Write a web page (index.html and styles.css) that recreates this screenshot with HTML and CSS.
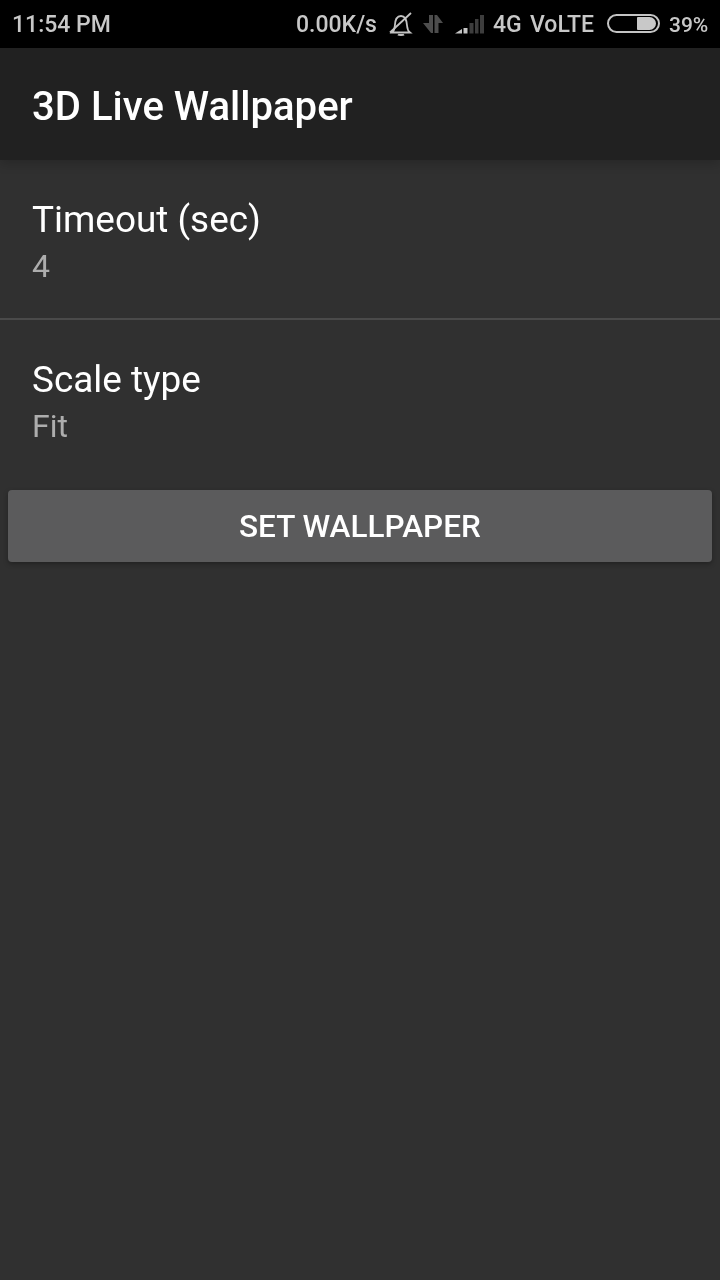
FILE: index.html
```html
<!DOCTYPE html>
<html lang="en">

<head>
    <meta charset="UTF-8">
    <title>3D Live Wallpaper</title>
    <link rel="stylesheet" href="styles.css">
</head>

<body>
    <div class="status">
        <div class="time">11:54 PM</div>
        <div class="indicators">
            <span class="speed">0.00K/s</span>
            <svg class="ic-bell" width="24" height="25" viewBox="0 0 24 25" fill="none" stroke="#c4c4c4" stroke-width="1.800">
                <path d="M3 20.500h18c-2-1.500-2.700-3.500-2.900-6.500-.3-5-1-10-6.100-10S6 9 5.800 14c-.1 3-1 5-2.800 6.500z" />
                <path d="M9 22.500c1 .8 5 .8 6 0" stroke-width="2" />
                <path d="M1 20.500L22 1" />
            </svg>
            <svg class="ic-data" width="22" height="25" viewBox="0 0 22 25" fill="#4d4d4d">
                <path d="M11 3v18H9L1 11h6V3z" />
                <path d="M12.500 21V3H15l6 8h-4.500v10z" />
            </svg>
            <svg class="ic-signal" width="32" height="25" viewBox="0 0 32 25" fill="#3d3d3d">
                <path d="M1 21.500L8 17v4.500z" fill="#c4c4c4" />
                <rect x="9.500" y="16" width="4" height="5.500" fill="#c4c4c4" />
                <rect x="15.500" y="11" width="4" height="10.500" />
                <rect x="21" y="7" width="3.500" height="14.500" />
                <rect x="26" y="3" width="4" height="18.500" />
            </svg>
            <span class="net">4G</span>
            <span class="net">VoLTE</span>
            <div class="battery"><div class="battery-fill"></div></div>
            <span class="pct">39%</span>
        </div>
    </div>
    <div class="toolbar"><span class="toolbar-title">3D Live Wallpaper</span></div>
    <div class="content">
        <div class="pref">
            <div class="pref-title">Timeout (sec)</div>
            <div class="pref-value">4</div>
        </div>
        <div class="pref pref-last">
            <div class="pref-title">Scale type</div>
            <div class="pref-value">Fit</div>
        </div>
        <div class="btn"><span class="btn-label">SET WALLPAPER</span></div>
    </div>
</body>

</html>
```

FILE: styles.css
```css
* {
    padding: 0;
    margin: 0;
    box-sizing: border-box;
}

html,
body {
    height: 100%;
    width: 100%;
}

body {
    display: flex;
    flex-direction: column;
    background: #303030;
    font-family: Roboto, "Liberation Sans", sans-serif;
    overflow: hidden;
}

/* own layer, so the text gets grey antialiasing like the phone */
.time,
.speed,
.net,
.pct,
.toolbar-title,
.pref-title,
.pref-value,
.btn-label {
    will-change: transform;
}

.toolbar-title,
.btn-label {
    display: inline-block;
}

.status {
    height: 48px;
    flex: none;
    background: #000;
    color: #c8c8c8;
    display: flex;
    justify-content: space-between;
    align-items: center;
    padding: 1px 12px 0 12px;
    font-weight: 500;
    font-size: 23px;
}

.indicators {
    display: flex;
    align-items: center;
}

.speed {
    margin-right: 12px;
}

.ic-bell {
    margin-right: 9px;
}

.ic-data {
    margin-right: 10px;
}

.ic-signal {
    margin-right: 7px;
}

.net {
    margin-right: 8px;
}

.net + .net {
    margin-right: 13px;
}

.battery {
    width: 53px;
    height: 19px;
    border: 2px solid #c4c4c4;
    border-radius: 10px;
    margin: 0 9px 2px 0;
    padding: 1px 2px;
    display: flex;
    justify-content: flex-end;
}

.battery-fill {
    width: 19px;
    background: #c8c8c8;
    border-radius: 1px 7px 7px 1px;
}

.pct {
    font-size: 21px;
}

.toolbar {
    height: 112px;
    flex: none;
    background: #212121;
    color: #fff;
    font-size: 40.1px;
    font-weight: 500;
    line-height: 117px;
    padding-left: 32px;
    position: relative;
    box-shadow: 0 4px 10px rgba(0, 0, 0, 0.18);
}

.content {
    flex: 1;
}

.pref {
    height: 160px;
    padding: 33px 32px 0;
    border-bottom: 2px solid #4a4a4a;
}

.pref-last {
    border-bottom: none;
}

.pref-title {
    color: #fff;
    font-size: 36.9px;
    line-height: 54px;
}

.pref-value {
    color: #adadad;
    font-size: 32px;
    line-height: 38px;
}

.btn {
    height: 72px;
    margin: 10px 8px 0;
    background: #5b5b5c;
    border-radius: 4px;
    color: #fff;
    font-size: 31.5px;
    font-weight: 500;
    text-align: center;
    line-height: 74px;
    box-shadow: 0 2px 5px rgba(0, 0, 0, 0.3);
}
```
